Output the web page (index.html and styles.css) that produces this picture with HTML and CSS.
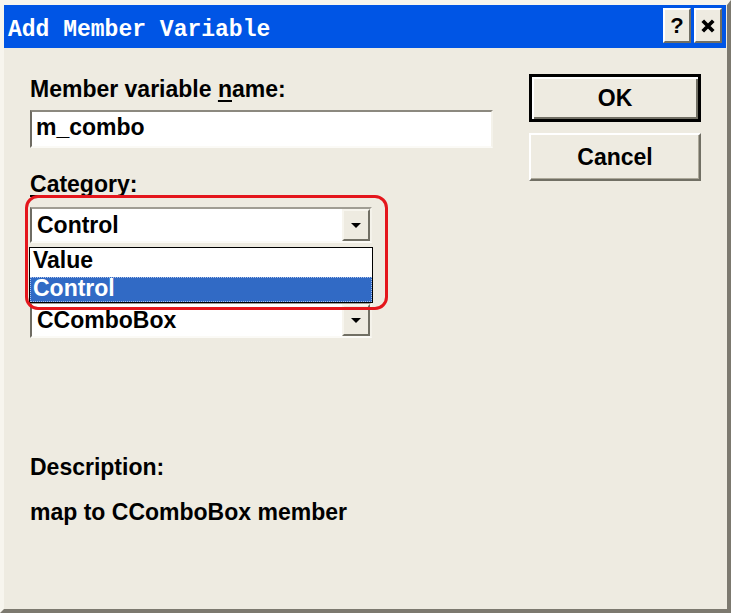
FILE: index.html
```html
<!DOCTYPE html>
<html lang="en">
<head>
    <meta charset="UTF-8">
    <title>Add Member Variable</title>
    <link rel="stylesheet" href="styles.css">
</head>
<body>
    <div class="window">
        <div class="titlebar">
            <span class="title">Add Member Variable</span>
            <div class="caption-buttons">
                <button class="caption-btn help">?</button>
                <button class="caption-btn">
                    <svg viewBox="0 0 12 12" width="14" height="14">
                        <path d="M1.5 1.5 L10.5 10.5 M10.5 1.5 L1.5 10.5" stroke="#000" stroke-width="3.2" fill="none"/>
                    </svg>
                </button>
            </div>
        </div>

        <div class="dialog-body">
            <div class="fields">
                <div class="field-label">Member variable <u>n</u>ame:</div>
                <div class="textbox">m_combo</div>

                <div class="field-label spaced"><u>C</u>ategory:</div>
                <div class="combo-wrap">
                    <div class="combo">
                        <span class="combo-text">Control</span>
                        <span class="drop-btn"><span class="arrow"></span></span>
                    </div>
                    <ul class="drop-list">
                        <li>Value</li>
                        <li class="selected">Control</li>
                    </ul>
                </div>

                <!-- label row hidden under the open list -->
                <div class="field-label spaced"></div>
                <div class="combo">
                    <span class="combo-text">CComboBox</span>
                    <span class="drop-btn"><span class="arrow"></span></span>
                </div>

                <div class="desc-label">Description:</div>
                <div class="desc-text">map to CComboBox member</div>

                <!-- red annotation ring -->
                <div class="callout"></div>
            </div>

            <div class="buttons">
                <button class="push-btn default">OK</button>
                <button class="push-btn">Cancel</button>
            </div>
        </div>
    </div>
</body>
</html>
```

FILE: styles.css
```css
:root {
    --face: #eeebe1;
    --title-blue: #0055e5;
    --light: #ffffff;
    --shadow: #aca899;
    --dark-shadow: #716f64;
    --select: #316ac5;
}

* {
    box-sizing: border-box;
}

body {
    margin: 0;
    background-color: var(--face);
    font-family: "Liberation Sans", Arial, sans-serif;
    font-weight: bold;
    font-size: 23px;
    color: #000;
}

.window {
    width: 731px;
    height: 613px;
    background-color: var(--face);
    border-top: 5px solid #f7f5ee;
    border-left: 4px solid #f7f5ee;
    border-right: 4px solid #7c796f;
    border-bottom: 4px solid #7c796f;
}

.titlebar {
    height: 43px;
    margin-right: 1px;
    background-color: var(--title-blue);
    display: flex;
    justify-content: space-between;
    align-items: flex-start;
    padding: 3px 4px 0 4px;
}

.title {
    font-family: "Liberation Mono", "Courier New", monospace;
    font-size: 23px;
    color: #fff;
    line-height: 35px;
    padding-top: 5px;
}

.caption-buttons {
    display: flex;
    gap: 3px;
}

.caption-btn {
    width: 28px;
    height: 35px;
    padding: 0;
    background-color: var(--face);
    border: 2px solid;
    border-color: var(--light) var(--dark-shadow) var(--dark-shadow) var(--light);
    display: flex;
    align-items: center;
    justify-content: center;
    font-family: "Liberation Sans", Arial, sans-serif;
    font-weight: bold;
    font-size: 22px;
    color: #000;
}

.dialog-body {
    display: flex;
    gap: 36px;
    padding: 26px 0 0 26px;
}

.fields {
    position: relative;
    width: 463px;
    padding-top: 1px;
}

.field-label {
    line-height: 28px;
    height: 28px;
}

.field-label u {
    text-decoration-thickness: 2px;
    text-underline-offset: 3px;
}

.spaced {
    margin-top: 22px;
}

.textbox {
    margin-top: 7px;
    height: 38px;
    padding-left: 4px;
    line-height: 30px;
    background-color: #fff;
    border: 2px solid;
    border-color: #8c897f #f4f2ea #fbfaf6 #6f6c63;
}

.combo-wrap {
    position: relative;
}

.combo {
    margin-top: 9px;
    width: 342px;
    height: 36px;
    display: flex;
    justify-content: space-between;
    background-color: #fff;
    border: 2px solid;
    border-color: #a09d93 #f4f2ea #fbfaf6 #6f6c63;
}

.combo-text {
    padding-left: 5px;
    line-height: 32px;
}

.drop-btn {
    width: 28px;
    height: 32px;
    background-color: var(--face);
    border: 2px solid;
    border-color: #f7f5ee var(--dark-shadow) var(--dark-shadow) #f7f5ee;
    display: flex;
    align-items: center;
    justify-content: center;
}

.arrow {
    width: 0;
    height: 0;
    border-left: 5px solid transparent;
    border-right: 5px solid transparent;
    border-top: 5px solid #000;
}

.drop-list {
    position: absolute;
    left: -1px;
    top: 40px;
    width: 344px;
    margin: 0;
    padding: 0;
    list-style: none;
    background-color: #fff;
    border: 1px solid #000;
    z-index: 2;
}

.drop-list li {
    height: 27px;
    line-height: 27px;
    padding-left: 3px;
}

.drop-list li:first-child {
    height: 29px;
    line-height: 25px;
}

.drop-list .selected {
    height: 25px;
    line-height: 23px;
    background-color: var(--select);
    color: #fff;
    outline: 1px dotted #a9c0ea;
    outline-offset: -1px;
}

.desc-label {
    margin-top: 115px;
    line-height: 28px;
}

.desc-text {
    margin-top: 17px;
    line-height: 28px;
}

.callout {
    position: absolute;
    left: -5px;
    top: 121px;
    width: 363px;
    height: 115px;
    border: 3px solid #e4161c;
    border-radius: 13px;
    z-index: 3;
}

.buttons {
    display: flex;
    flex-direction: column;
    gap: 11px;
    width: 172px;
}

.push-btn {
    height: 48px;
    width: 172px;
    padding: 0;
    background-color: var(--face);
    font-family: "Liberation Sans", Arial, sans-serif;
    font-weight: bold;
    font-size: 23px;
    color: #000;
    border: 2px solid;
    border-color: var(--light) var(--dark-shadow) var(--dark-shadow) var(--light);
    box-shadow: inset -1px -1px 0 var(--shadow);
}

.push-btn.default {
    border: 3px solid #000;
    box-shadow: inset 2px 2px 0 var(--light), inset -2px -2px 0 var(--dark-shadow);
}
```
